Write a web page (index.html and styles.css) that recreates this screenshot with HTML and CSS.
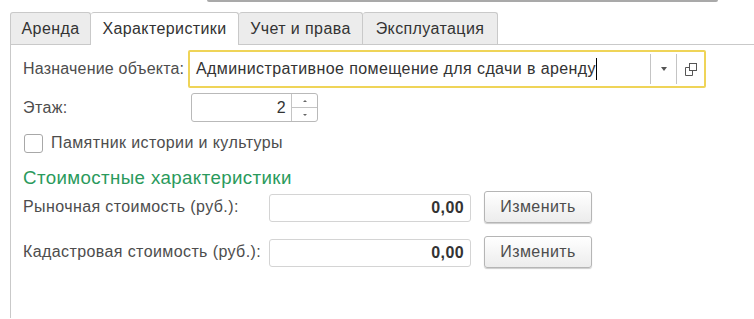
FILE: index.html
```html
<!DOCTYPE html>
<html lang="ru">
<head>
  <meta charset="UTF-8">
  <title>Характеристики</title>
  <link rel="stylesheet" href="styles.css">
</head>
<body>
  <!-- край поля над вкладками -->
  <div class="top-edge"></div>

  <!-- вкладки -->
  <div class="tabs">
    <div class="tab tab-rent">Аренда</div>
    <div class="tab tab-props active">Характеристики</div>
    <div class="tab tab-rights">Учет и права</div>
    <div class="tab tab-usage">Эксплуатация</div>
  </div>

  <div class="panel">
    <div class="row row-purpose">
      <span class="label label-purpose">Назначение объекта:</span>
      <div class="select focused">
        <span class="select-text">Административное помещение для сдачи в аренду</span><span class="caret"></span>
        <span class="select-btn select-drop"><span class="triangle"></span></span>
        <span class="select-btn select-open">
          <svg width="12" height="13" viewBox="0 0 12 13">
            <rect x="4.5" y="0.5" width="7" height="7" fill="none" stroke="#555" />
            <path d="M4.5 4.5 H0.5 V12.5 H7.5 V7.5" fill="none" stroke="#555" />
          </svg>
        </span>
      </div>
    </div>

    <div class="row row-floor">
      <span class="label label-floor">Этаж:</span>
      <div class="spin">
        <span class="spin-value">2</span>
        <span class="spin-btns">
          <span class="spin-up"></span>
          <span class="spin-down"></span>
        </span>
      </div>
    </div>

    <label class="row row-check">
      <span class="checkbox"></span>
      <span class="check-text">Памятник истории и культуры</span>
    </label>

    <div class="group-title">Стоимостные характеристики</div>

    <div class="row row-cost">
      <span class="label label-cost">Рыночная стоимость (руб.):</span>
      <div class="amount">0,00</div>
      <button class="btn">Изменить</button>
    </div>

    <div class="row row-cost">
      <span class="label label-cost">Кадастровая стоимость (руб.):</span>
      <div class="amount">0,00</div>
      <button class="btn">Изменить</button>
    </div>
  </div>
</body>
</html>
```

FILE: styles.css
```css
/* общая раскладка */
body {
  margin: 0;
  background: #fff;
  font-family: 'Liberation Sans', Arial, sans-serif;
  font-size: 16px;
  letter-spacing: 0.4px;
  color: #4d4d4d;
  height: 319px;
  overflow: hidden;
}

.top-edge {
  margin-left: 207px;
  width: 511px;
  height: 0;
  border-bottom: 2px solid #a9a9a9;
  border-radius: 0 0 3px 3px;
}

/* вкладки */
.tabs {
  display: flex;
  margin-top: 10px;
  padding-left: 10px;
  position: relative;
  z-index: 1;
}

.tab {
  box-sizing: border-box;
  height: 32px;
  line-height: 31px;
  text-align: center;
  white-space: nowrap;
  border: 1px solid #c9c9c9;
  border-bottom: none;
  border-left: none;
  border-radius: 3px 3px 0 0;
  background: #ececec;
  color: #333;
}

.tab-rent {
  border-left: 1px solid #c9c9c9;
  width: 81px;
}

.tab-props {
  width: 148px;
}

.tab-rights {
  width: 124px;
}

.tab-usage {
  width: 135px;
}

.tab.active {
  background: #fff;
  height: 33px;
  margin-bottom: -1px;
}

.panel {
  margin-left: 10px;
  border-left: 1px solid #c9c9c9;
  border-top: 1px solid #c9c9c9;
  padding: 5px 0 0 12px;
  height: 268px;
}

/* строки формы */
.row {
  display: flex;
  align-items: center;
}

.label {
  flex: none;
  white-space: nowrap;
}

.label-purpose {
  width: 165px;
  letter-spacing: 0.2px;
}

.label-floor {
  width: 168px;
}

.label-cost {
  width: 246px;
}

.select {
  display: flex;
  align-items: center;
  width: 514px;
  height: 34px;
  border: 2px solid #efd458;
  border-radius: 2px;
}

.select-text {
  padding-left: 6px;
  color: #333;
  white-space: nowrap;
}

.caret {
  width: 1px;
  height: 22px;
  background: #000;
}

.select-btn {
  display: flex;
  align-items: center;
  justify-content: center;
  height: 30px;
  border-left: 1px solid #c4c4c4;
}

.select-drop {
  margin-left: auto;
  width: 25px;
}

.select-open {
  width: 27px;
}

.triangle {
  width: 0;
  height: 0;
  border-left: 3px solid transparent;
  border-right: 3px solid transparent;
  border-top: 4px solid #555;
}

.row-floor {
  margin-top: 5px;
}

.spin {
  display: flex;
  width: 125px;
  height: 27px;
  border: 1px solid #b9b9b9;
  border-radius: 3px;
}

.spin-value {
  flex: 1;
  text-align: right;
  line-height: 27px;
  padding-right: 5px;
  color: #333;
}

.spin-btns {
  display: flex;
  flex-direction: column;
  width: 25px;
  border-left: 1px solid #c4c4c4;
}

.spin-up,
.spin-down {
  flex: 1;
  display: flex;
  align-items: center;
  justify-content: center;
}

.spin-up {
  border-bottom: 1px solid #c4c4c4;
}

.spin-up::after,
.spin-down::after {
  content: "";
  border-left: 2px solid transparent;
  border-right: 2px solid transparent;
}

.spin-up::after {
  border-bottom: 2px solid #666;
}

.spin-down::after {
  border-top: 2px solid #666;
}

.row-check {
  margin-top: 9px;
  height: 24px;
}

.checkbox {
  width: 17px;
  height: 17px;
  border: 1px solid #a8a8a8;
  border-radius: 3px;
  margin-left: 1px;
  margin-right: 8px;
}

.check-text {
  white-space: nowrap;
}

.group-title {
  margin-top: 11px;
  font-size: 18.7px;
  line-height: 24px;
  white-space: nowrap;
  color: #2a9a5c;
}

.row-cost {
  margin-top: 1px;
  height: 32px;
}

.row-cost + .row-cost {
  margin-top: 13px;
}

.amount {
  width: 194px;
  height: 26px;
  line-height: 26px;
  border: 1px solid #d4d4d4;
  border-radius: 3px;
  text-align: right;
  padding-right: 6px;
  font-weight: bold;
  color: #333;
  margin-top: 2px;
}

.btn {
  margin-left: 13px;
  width: 108px;
  height: 32px;
  font-family: inherit;
  font-size: 16px;
  letter-spacing: 0.4px;
  color: #4d4d4d;
  border: 1px solid #b5b5b5;
  border-radius: 3px;
  background: linear-gradient(#ffffff, #ececec);
  box-shadow: 0 1px 1px rgba(0, 0, 0, 0.2);
}
```
